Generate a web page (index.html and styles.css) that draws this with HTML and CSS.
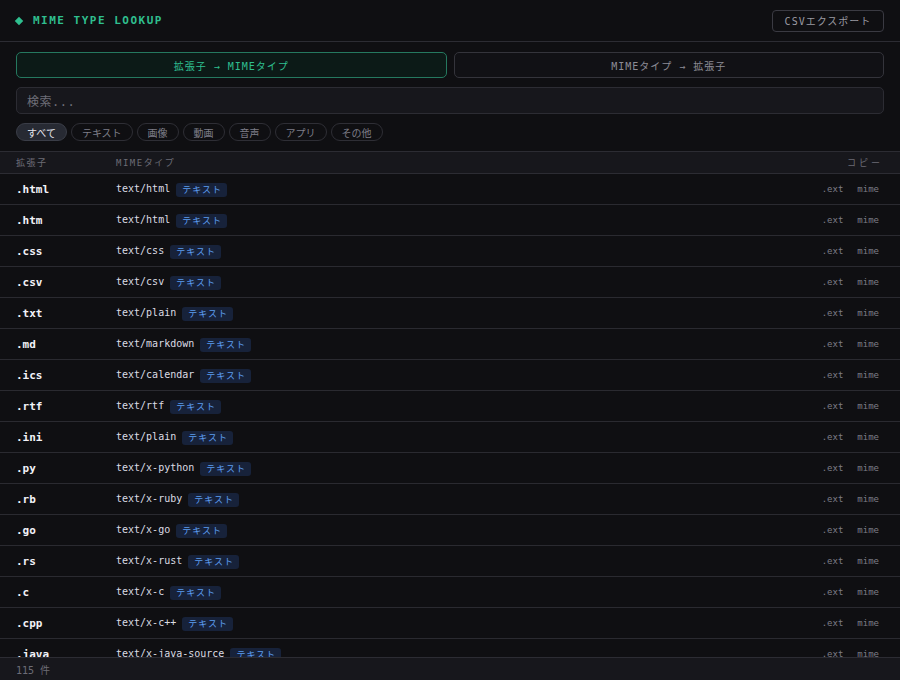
FILE: index.html
```html
<!DOCTYPE html>
<html lang="ja">
<head>
<meta charset="utf-8">
<title>MIME TYPE LOOKUP</title>
<link rel="stylesheet" href="styles.css">
</head>
<body>
<div class="app">
  <header class="topbar">
    <h1 class="title"><span class="diamond"></span>MIME TYPE LOOKUP</h1>
    <button class="export">CSVエクスポート</button>
  </header>
  <div class="controls">
    <div class="tabs">
      <button class="tab active">拡張子 → MIMEタイプ</button>
      <button class="tab">MIMEタイプ → 拡張子</button>
    </div>
    <div class="search">検索...</div>
    <div class="chips">
      <span class="chip on">すべて</span>
      <span class="chip">テキスト</span>
      <span class="chip">画像</span>
      <span class="chip">動画</span>
      <span class="chip">音声</span>
      <span class="chip">アプリ</span>
      <span class="chip">その他</span>
    </div>
  </div>
  <div class="thead">
    <span class="c-ext">拡張子</span>
    <span class="c-mime">MIMEタイプ</span>
    <span class="c-copy">コピー</span>
  </div>
  <div class="tbody">
    <div class="row"><span class="ext">.html</span><span class="mime">text/html</span><span class="tag">テキスト</span><span class="copy"><span>.ext</span><span>mime</span></span></div>
    <div class="row"><span class="ext">.htm</span><span class="mime">text/html</span><span class="tag">テキスト</span><span class="copy"><span>.ext</span><span>mime</span></span></div>
    <div class="row"><span class="ext">.css</span><span class="mime">text/css</span><span class="tag">テキスト</span><span class="copy"><span>.ext</span><span>mime</span></span></div>
    <div class="row"><span class="ext">.csv</span><span class="mime">text/csv</span><span class="tag">テキスト</span><span class="copy"><span>.ext</span><span>mime</span></span></div>
    <div class="row"><span class="ext">.txt</span><span class="mime">text/plain</span><span class="tag">テキスト</span><span class="copy"><span>.ext</span><span>mime</span></span></div>
    <div class="row"><span class="ext">.md</span><span class="mime">text/markdown</span><span class="tag">テキスト</span><span class="copy"><span>.ext</span><span>mime</span></span></div>
    <div class="row"><span class="ext">.ics</span><span class="mime">text/calendar</span><span class="tag">テキスト</span><span class="copy"><span>.ext</span><span>mime</span></span></div>
    <div class="row"><span class="ext">.rtf</span><span class="mime">text/rtf</span><span class="tag">テキスト</span><span class="copy"><span>.ext</span><span>mime</span></span></div>
    <div class="row"><span class="ext">.ini</span><span class="mime">text/plain</span><span class="tag">テキスト</span><span class="copy"><span>.ext</span><span>mime</span></span></div>
    <div class="row"><span class="ext">.py</span><span class="mime">text/x-python</span><span class="tag">テキスト</span><span class="copy"><span>.ext</span><span>mime</span></span></div>
    <div class="row"><span class="ext">.rb</span><span class="mime">text/x-ruby</span><span class="tag">テキスト</span><span class="copy"><span>.ext</span><span>mime</span></span></div>
    <div class="row"><span class="ext">.go</span><span class="mime">text/x-go</span><span class="tag">テキスト</span><span class="copy"><span>.ext</span><span>mime</span></span></div>
    <div class="row"><span class="ext">.rs</span><span class="mime">text/x-rust</span><span class="tag">テキスト</span><span class="copy"><span>.ext</span><span>mime</span></span></div>
    <div class="row"><span class="ext">.c</span><span class="mime">text/x-c</span><span class="tag">テキスト</span><span class="copy"><span>.ext</span><span>mime</span></span></div>
    <div class="row"><span class="ext">.cpp</span><span class="mime">text/x-c++</span><span class="tag">テキスト</span><span class="copy"><span>.ext</span><span>mime</span></span></div>
    <div class="row"><span class="ext">.java</span><span class="mime">text/x-java-source</span><span class="tag">テキスト</span><span class="copy"><span>.ext</span><span>mime</span></span></div>
    <div class="row"><span class="ext">.js</span><span class="mime">text/javascript</span><span class="tag">テキスト</span><span class="copy"><span>.ext</span><span>mime</span></span></div>
  </div>
  <footer class="footer">115 件</footer>
</div>
</body>
</html>
```

FILE: styles.css
```css
* { box-sizing: border-box; }
html, body { margin: 0; padding: 0; }
body {
  background: #0f0f12;
  color: #d8d8e0;
  font-family: "DejaVu Sans Mono", "Noto Sans CJK JP", monospace;
  width: 900px;
  height: 680px;
  overflow: hidden;
}
.app {
  height: 680px;
  display: flex;
  flex-direction: column;
}
.topbar {
  height: 42px;
  flex: none;
  display: flex;
  align-items: center;
  justify-content: space-between;
  padding: 0 16px;
  border-bottom: 1px solid #2c2c33;
}
.title {
  margin: 0;
  font-size: 11px;
  font-weight: bold;
  letter-spacing: 1.5px;
  color: #2fbf8f;
  display: flex;
  align-items: center;
  gap: 11px;
}
.diamond {
  width: 6px;
  height: 6px;
  background: #2fbf8f;
  transform: rotate(45deg);
  display: inline-block;
}
.export {
  height: 22px;
  width: 112px;
  background: transparent;
  border: 1px solid #3a3a42;
  border-radius: 4px;
  color: #9a9aa3;
  font-family: inherit;
  font-size: 10px;
  letter-spacing: 1px;
  padding: 0;
}
.controls {
  padding: 10px 16px 10px;
  display: flex;
  flex-direction: column;
  gap: 9px;
  flex: none;
}
.tabs {
  display: flex;
  gap: 7px;
}
.tab {
  flex: 1;
  height: 26px;
  background: #111115;
  border: 1px solid #34343b;
  border-radius: 5px;
  color: #8c8c95;
  font-family: inherit;
  font-size: 10px;
  letter-spacing: 1px;
  padding: 0;
}
.tab.active {
  background: #0c1a17;
  border-color: #25785f;
  color: #2fbf8f;
}
.search {
  height: 27px;
  background: #17171c;
  border: 1px solid #2c2c33;
  border-radius: 5px;
  padding: 0 10px;
  display: flex;
  align-items: center;
  color: #6e6e78;
  font-size: 12px;
  letter-spacing: 0.5px;
}
.chips {
  display: flex;
  gap: 4px;
}
.chip {
  height: 18px;
  padding: 0 10px;
  border: 1px solid #2e2e35;
  border-radius: 9px;
  display: flex;
  align-items: center;
  font-size: 10px;
  color: #7e7e88;
}
.chip.on {
  background: #272a33;
  border-color: #3a3d47;
  color: #e6e6ee;
}
.thead {
  flex: none;
  height: 23px;
  background: #17171c;
  border-top: 1px solid #2c2c33;
  border-bottom: 1px solid #2c2c33;
  display: flex;
  align-items: center;
  padding: 0 17px 0 16px;
  font-size: 9px;
  letter-spacing: 1.5px;
  color: #6c6c76;
}
.c-ext { width: 100px; }
.c-mime { flex: 1; }
.c-copy { letter-spacing: 3px; }
.tbody {
  flex: 1;
  overflow: hidden;
}
.row {
  height: 31px;
  border-bottom: 1px solid #2a2a30;
  display: flex;
  align-items: center;
  padding: 0 21px 0 16px;
}
.ext {
  width: 100px;
  font-size: 11px;
  font-weight: bold;
  color: #f2f2f8;
}
.mime {
  font-size: 10px;
  color: #dcdce4;
  margin-top: -2px;
}
.tag {
  margin-left: 6px;
  background: #17223a;
  color: #5d9ef0;
  font-size: 9px;
  letter-spacing: 1px;
  padding: 1px 5px 1px 6px;
  border-radius: 3px;
  line-height: 12px;
  margin-top: 2px;
}
.copy {
  margin-left: auto;
  display: flex;
  gap: 14px;
  font-size: 9px;
  color: #7c7c86;
}
.footer {
  flex: none;
  height: 23px;
  background: #17171c;
  border-top: 1px solid #2c2c33;
  padding: 0 16px;
  display: flex;
  align-items: center;
  font-size: 10px;
  color: #6c6c76;
}
```
